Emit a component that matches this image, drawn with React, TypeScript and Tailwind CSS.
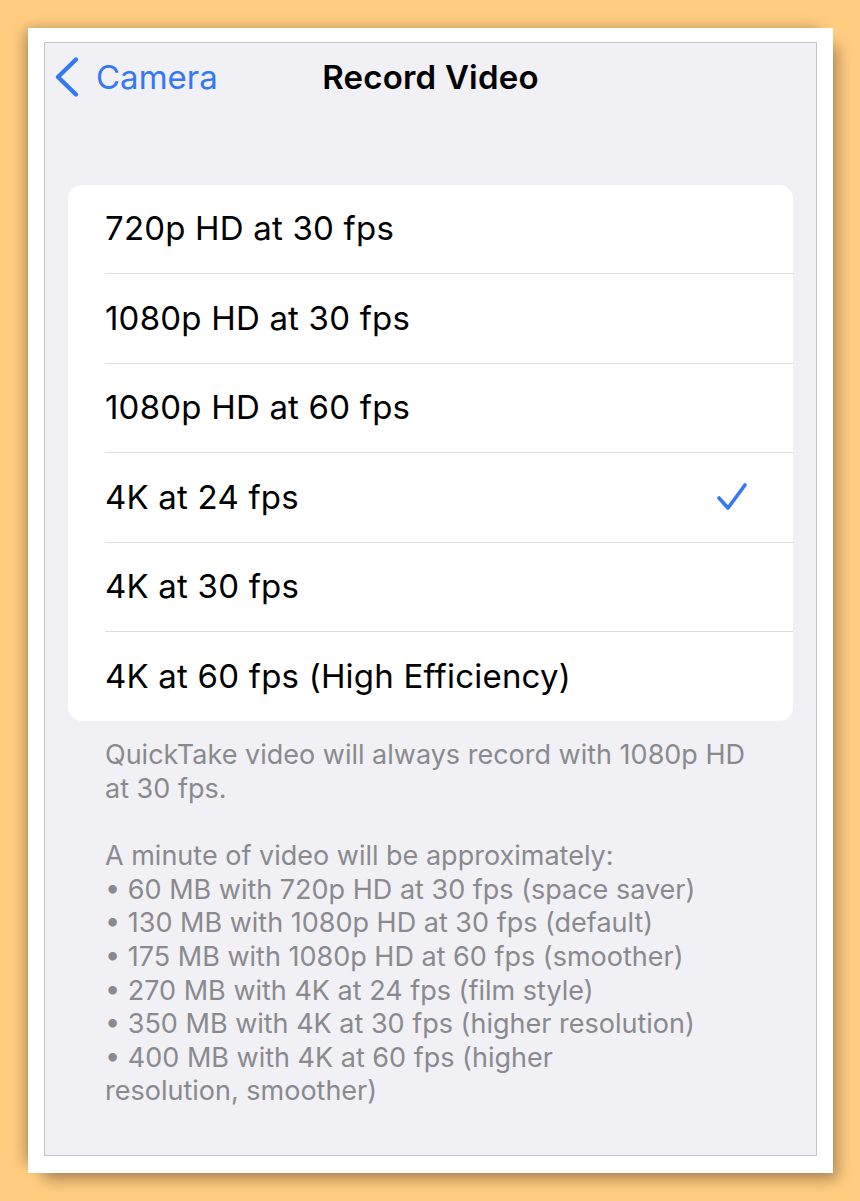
const formats = [
  "720p HD at 30 fps",
  "1080p HD at 30 fps",
  "1080p HD at 60 fps",
  "4K at 24 fps",
  "4K at 30 fps",
  "4K at 60 fps (High Efficiency)",
];

const sizes = [
  "• 60 MB with 720p HD at 30 fps (space saver)",
  "• 130 MB with 1080p HD at 30 fps (default)",
  "• 175 MB with 1080p HD at 60 fps (smoother)",
  "• 270 MB with 4K at 24 fps (film style)",
  "• 350 MB with 4K at 30 fps (higher resolution)",
  "• 400 MB with 4K at 60 fps (higher",
  "resolution, smoother)",
];

export default function App() {
  const selected = 3;

  return (
    <div
      className="w-[860px] h-[1201px] bg-[#ffcc80] pt-[28px] pl-[28px]"
      style={{ fontFamily: "Inter, 'Noto Sans', sans-serif" }}
    >
      <div className="w-[805px] h-[1145px] bg-white pt-[14px] px-[16px] pb-[17px] shadow-[-8px_-4px_14px_-6px_rgba(0,0,0,0.35),10px_12px_14px_-6px_rgba(0,0,0,0.35)]">
        <div className="h-full border border-[#c4c4c8] bg-[#f1f0f5] flex flex-col">
          {/* Nav bar */}
          <div className="relative h-[68px] flex items-center">
            <button className="flex items-center pl-[9px] text-[#3478f6]">
              <svg width="26" height="42" viewBox="0 0 26 42" fill="none">
                <polyline
                  points="22,3.5 4,21 22,38.5"
                  stroke="#3478f6"
                  strokeWidth="4.4"
                  strokeLinecap="round"
                  strokeLinejoin="round"
                />
              </svg>
              <span className="ml-[16px] text-[33px] leading-none">Camera</span>
            </button>
            <h1 className="absolute left-1/2 -translate-x-1/2 text-[33px] font-semibold leading-none text-black tracking-[0.2px]">
              Record Video
            </h1>
          </div>

          {/* Options */}
          <div className="mx-[23px] mt-[74px] bg-white rounded-[14px] overflow-hidden">
            {formats.map((f, i) => (
              <div key={f} className="pl-[37px] h-[89.4px]">
                <div
                  className={`h-full flex items-center justify-between pr-[44px] ${
                    i < formats.length - 1 ? "border-b border-[#dedee2]" : ""
                  }`}
                >
                  <span className="text-[33px] text-black tracking-[0.2px]">{f}</span>
                  {i === selected && (
                    <svg width="34" height="32" viewBox="0 0 34 32" fill="none">
                      <polyline
                        points="4,17 13,27 30,4"
                        stroke="#3478f6"
                        strokeWidth="3.6"
                        strokeLinecap="round"
                        strokeLinejoin="round"
                      />
                    </svg>
                  )}
                </div>
              </div>
            ))}
          </div>

          {/* Footer */}
          <div className="ml-[60px] mr-[20px] mt-[17px] text-[27px] leading-[33.6px] text-[#8a8a8e] whitespace-nowrap">
            <p>QuickTake video will always record with 1080p HD</p>
            <p>at 30 fps.</p>
            <p className="mt-[33.6px]">A minute of video will be approximately:</p>
            {sizes.map((s) => (
              <p key={s}>{s}</p>
            ))}
          </div>
        </div>
      </div>
    </div>
  );
}
